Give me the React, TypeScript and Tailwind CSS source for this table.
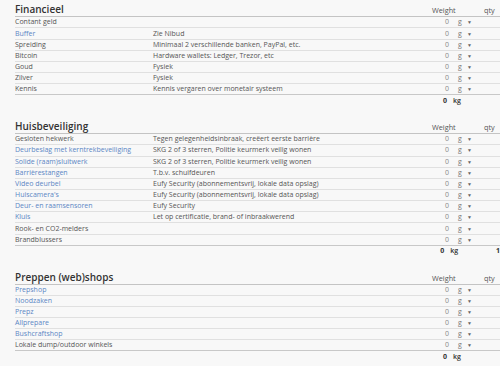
import React from "react";

type Item = { name: string; desc?: string; link?: boolean };

const sections: { title: string; items: Item[]; qtyTotal?: boolean }[] = [
  {
    title: "Financieel",
    items: [
      { name: "Contant geld" },
      { name: "Buffer", desc: "Zie Nibud", link: true },
      { name: "Spreiding", desc: "Minimaal 2 verschillende banken, PayPal, etc." },
      { name: "Bitcoin", desc: "Hardware wallets: Ledger, Trezor, etc" },
      { name: "Goud", desc: "Fysiek" },
      { name: "Zilver", desc: "Fysiek" },
      { name: "Kennis", desc: "Kennis vergaren over monetair systeem" },
    ],
  },
  {
    title: "Huisbeveiliging",
    qtyTotal: true,
    items: [
      { name: "Gesloten hekwerk", desc: "Tegen gelegenheidsinbraak, creëert eerste barrière" },
      { name: "Deurbeslag met kerntrekbeveiliging", desc: "SKG 2 of 3 sterren, Politie keurmerk veilig wonen", link: true },
      { name: "Solide (raam)sluitwerk", desc: "SKG 2 of 3 sterren, Politie keurmerk veilig wonen", link: true },
      { name: "Barrièrestangen", desc: "T.b.v. schuifdeuren", link: true },
      { name: "Video deurbel", desc: "Eufy Security (abonnementsvrij, lokale data opslag)", link: true },
      { name: "Huiscamera's", desc: "Eufy Security (abonnementsvrij, lokale data opslag)", link: true },
      { name: "Deur- en raamsensoren", desc: "Eufy Security", link: true },
      { name: "Kluis", desc: "Let op certificatie, brand- of inbraakwerend", link: true },
      { name: "Rook- en CO2-melders" },
      { name: "Brandblussers" },
    ],
  },
  {
    title: "Preppen (web)shops",
    items: [
      { name: "Prepshop", link: true },
      { name: "Noodzaken", link: true },
      { name: "Prepz", link: true },
      { name: "Allprepare", link: true },
      { name: "Bushcraftshop", link: true },
      { name: "Lokale dump/outdoor winkels" },
    ],
  },
];

function Section({ title, items, qtyTotal, first }: { title: string; items: Item[]; qtyTotal?: boolean; first?: boolean }) {
  return (
    <div className={first ? "" : "mt-[10.5px]"}>
      <div className="flex h-[17.3px] items-end border-b border-[#c4c4c4] pb-[1px]">
        <div className="w-[417px] text-[10px] font-semibold leading-[12px] text-[#333]">{title}</div>
        <div className="w-[52px] text-[7.3px] leading-[10px] text-[#555]">Weight</div>
        <div className="text-[7.3px] leading-[10px] text-[#555]">qty</div>
      </div>
      {items.map((it, i) => (
        <div
          key={i}
          className={
            "flex h-[11.17px] items-center border-b text-[7px] leading-[10px] " +
            (i === items.length - 1 ? "border-[#c8c8c8]" : "border-[#e0e0e0]")
          }
        >
          <div className={"w-[138px] whitespace-nowrap " + (it.link ? "text-[#5b86c4]" : "text-[#555]")}>{it.name}</div>
          <div className="w-[279px] whitespace-nowrap text-[#555]">{it.desc ?? ""}</div>
          <div className="w-[17px] text-right text-[#888]">0</div>
          <div className="w-[9px]" />
          <div className="w-[9px] text-[#777]">g</div>
          <div className="text-[5px] text-[#666]">▼</div>
        </div>
      ))}
      <div className="flex h-[11px] items-center text-[7px] leading-[10px] text-[#333]">
        <div className="w-[412px]" />
        <div className="w-[20px] text-right font-bold">0</div>
        <div className="w-[52px] pl-[6px] font-semibold">kg</div>
        {qtyTotal ? <div className="font-bold">1</div> : null}
      </div>
    </div>
  );
}

export default function App() {
  return (
    <div
      className="h-[366px] w-[500px] overflow-hidden bg-[#f8f8f8]"
      style={{ fontFamily: '"Open Sans", "Noto Sans", sans-serif' }}
    >
      <div className="ml-[15px] w-[485px]">
        {sections.map((s, i) => (
          <Section key={i} title={s.title} items={s.items} qtyTotal={s.qtyTotal} first={i === 0} />
        ))}
      </div>
    </div>
  );
}
